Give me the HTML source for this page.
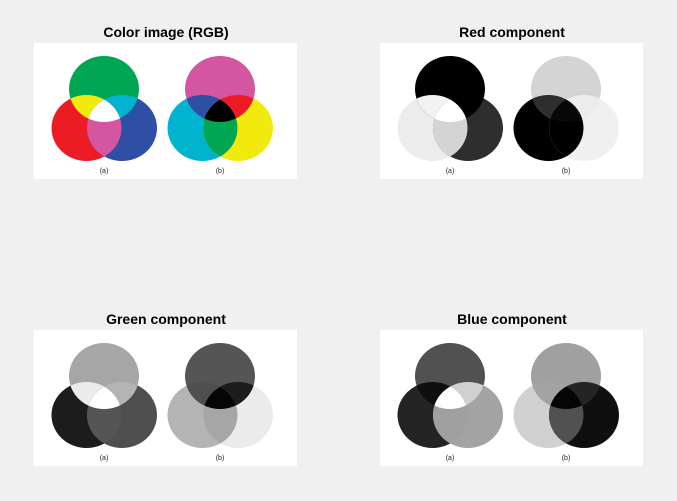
<!DOCTYPE html>
<html><head><meta charset="utf-8"><style>
html,body{margin:0;padding:0;background:#f0f0f0;}
body{width:677px;height:496px;overflow:hidden;}
text{font-family:"Liberation Sans",sans-serif;}
</style></head><body>
<svg width="677" height="496" viewBox="0 0 677 496" xmlns="http://www.w3.org/2000/svg">
<defs>
<clipPath id="cA" clipPathUnits="userSpaceOnUse"><circle cx="0" cy="0" r="35"/></clipPath>
<clipPath id="cB" clipPathUnits="userSpaceOnUse"><circle cx="-17.5" cy="41.4" r="35"/></clipPath>
<clipPath id="cC" clipPathUnits="userSpaceOnUse"><circle cx="18" cy="41.4" r="35"/></clipPath>
</defs>
<rect x="0" y="0" width="677" height="496" fill="#f0f0f0"/>
<rect x="34" y="43" width="263" height="136" fill="#fff"/>
<rect x="380" y="43" width="263" height="136" fill="#fff"/>
<rect x="34" y="330" width="263" height="136" fill="#fff"/>
<rect x="380" y="330" width="263" height="136" fill="#fff"/>
<g font-weight="bold" font-size="14" text-anchor="middle" fill="#000">
<text x="166" y="37">Color image (RGB)</text>
<text x="512" y="37">Red component</text>
<text x="166" y="324">Green component</text>
<text x="512" y="324">Blue component</text>
</g>
<g font-size="7" text-anchor="middle" fill="#222">
<text x="104" y="173">(a)</text><text x="220" y="173">(b)</text>
<text x="450" y="173">(a)</text><text x="566" y="173">(b)</text>
<text x="104" y="460">(a)</text><text x="220" y="460">(b)</text>
<text x="450" y="460">(a)</text><text x="566" y="460">(b)</text>
</g>

<g transform="translate(104,89) scale(1,0.943)">
<circle cx="-17.5" cy="41.4" r="35" fill="#ed1c24"/><circle cx="18" cy="41.4" r="35" fill="#2e4fa3"/><circle r="35" fill="#00a651"/>
<circle r="35" clip-path="url(#cB)" fill="#f2ea0c"/><circle r="35" clip-path="url(#cC)" fill="#00b4d0"/><circle cx="-17.5" cy="41.4" r="35" clip-path="url(#cC)" fill="#d455a0"/>
<g clip-path="url(#cA)"><circle cx="-17.5" cy="41.4" r="35" clip-path="url(#cC)" fill="#fff"/></g>
</g>
<g transform="translate(220,89) scale(1,0.943)">
<circle cx="-17.5" cy="41.4" r="35" fill="#00b4d0"/><circle cx="18" cy="41.4" r="35" fill="#f2ea0c"/><circle r="35" fill="#d455a0"/>
<circle r="35" clip-path="url(#cB)" fill="#2e4fa3"/><circle r="35" clip-path="url(#cC)" fill="#ed1c24"/><circle cx="-17.5" cy="41.4" r="35" clip-path="url(#cC)" fill="#00a651"/>
<g clip-path="url(#cA)"><circle cx="-17.5" cy="41.4" r="35" clip-path="url(#cC)" fill="#000"/></g>
</g>
<g transform="translate(450,89) scale(1,0.943)">
<circle cx="-17.5" cy="41.4" r="35" fill="#ececec"/><circle cx="18" cy="41.4" r="35" fill="#2e2e2e"/><circle r="35" fill="#000"/>
<circle r="35" clip-path="url(#cB)" fill="#f2f2f2"/><circle r="35" clip-path="url(#cC)" fill="#000"/><circle cx="-17.5" cy="41.4" r="35" clip-path="url(#cC)" fill="#d4d4d4"/>
<g clip-path="url(#cA)"><circle cx="-17.5" cy="41.4" r="35" clip-path="url(#cC)" fill="#fff"/></g>
</g>
<g transform="translate(566,89) scale(1,0.943)">
<circle cx="-17.5" cy="41.4" r="35" fill="#000"/><circle cx="18" cy="41.4" r="35" fill="#f0f0f0"/><circle r="35" fill="#d4d4d4"/>
<circle r="35" clip-path="url(#cB)" fill="#2e2e2e"/><circle r="35" clip-path="url(#cC)" fill="#ececec"/><circle cx="-17.5" cy="41.4" r="35" clip-path="url(#cC)" fill="#000"/>
<g clip-path="url(#cA)"><circle cx="-17.5" cy="41.4" r="35" clip-path="url(#cC)" fill="#080808"/></g>
</g>
<g transform="translate(104,376) scale(1,0.943)">
<circle cx="-17.5" cy="41.4" r="35" fill="#1c1c1c"/><circle cx="18" cy="41.4" r="35" fill="#4f4f4f"/><circle r="35" fill="#a6a6a6"/>
<circle r="35" clip-path="url(#cB)" fill="#ebebeb"/><circle r="35" clip-path="url(#cC)" fill="#b4b4b4"/><circle cx="-17.5" cy="41.4" r="35" clip-path="url(#cC)" fill="#555"/>
<g clip-path="url(#cA)"><circle cx="-17.5" cy="41.4" r="35" clip-path="url(#cC)" fill="#fff"/></g>
</g>
<g transform="translate(220,376) scale(1,0.943)">
<circle cx="-17.5" cy="41.4" r="35" fill="#b4b4b4"/><circle cx="18" cy="41.4" r="35" fill="#ebebeb"/><circle r="35" fill="#555"/>
<circle r="35" clip-path="url(#cB)" fill="#4f4f4f"/><circle r="35" clip-path="url(#cC)" fill="#1c1c1c"/><circle cx="-17.5" cy="41.4" r="35" clip-path="url(#cC)" fill="#a6a6a6"/>
<g clip-path="url(#cA)"><circle cx="-17.5" cy="41.4" r="35" clip-path="url(#cC)" fill="#050505"/></g>
</g>
<g transform="translate(450,376) scale(1,0.943)">
<circle cx="-17.5" cy="41.4" r="35" fill="#242424"/><circle cx="18" cy="41.4" r="35" fill="#a3a3a3"/><circle r="35" fill="#515151"/>
<circle r="35" clip-path="url(#cB)" fill="#0f0f0f"/><circle r="35" clip-path="url(#cC)" fill="#d0d0d0"/><circle cx="-17.5" cy="41.4" r="35" clip-path="url(#cC)" fill="#a0a0a0"/>
<g clip-path="url(#cA)"><circle cx="-17.5" cy="41.4" r="35" clip-path="url(#cC)" fill="#fff"/></g>
</g>
<g transform="translate(566,376) scale(1,0.943)">
<circle cx="-17.5" cy="41.4" r="35" fill="#d0d0d0"/><circle cx="18" cy="41.4" r="35" fill="#0f0f0f"/><circle r="35" fill="#a0a0a0"/>
<circle r="35" clip-path="url(#cB)" fill="#a3a3a3"/><circle r="35" clip-path="url(#cC)" fill="#242424"/><circle cx="-17.5" cy="41.4" r="35" clip-path="url(#cC)" fill="#515151"/>
<g clip-path="url(#cA)"><circle cx="-17.5" cy="41.4" r="35" clip-path="url(#cC)" fill="#050505"/></g>
</g>
</svg>
</body></html>
